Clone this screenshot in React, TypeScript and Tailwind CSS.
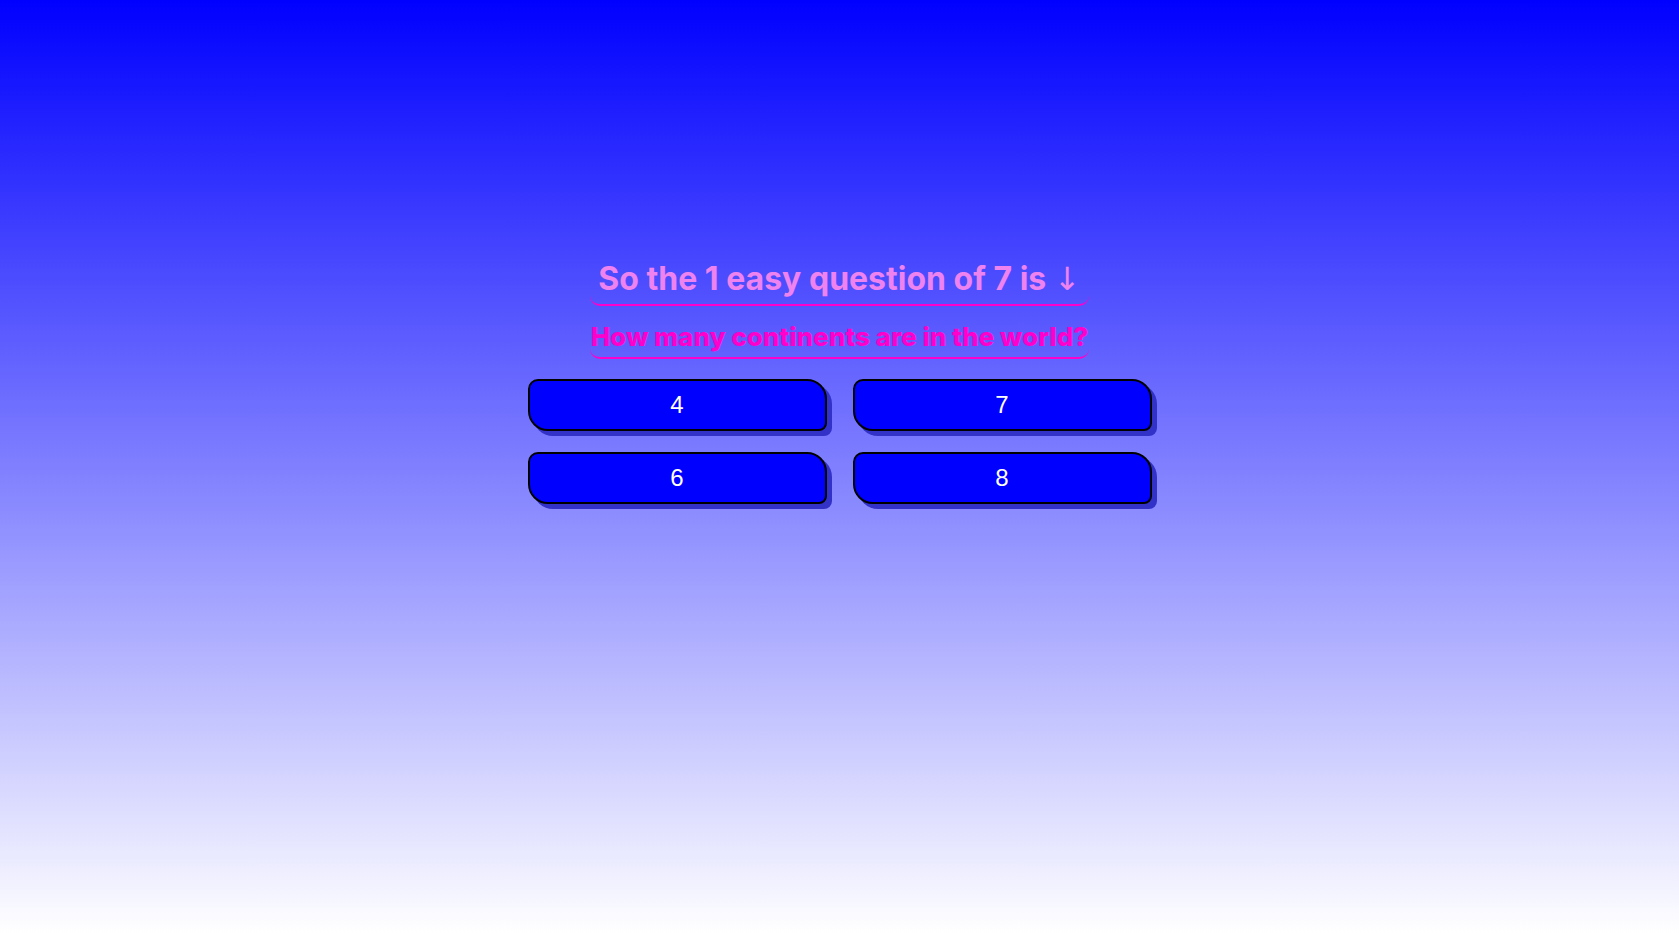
import { useState } from 'react'

const answers = ['4', '7', '6', '8']

export default function App() {
    const [picked, setPicked] = useState<string | null>(null)

    return (
        <div className="min-h-screen w-full bg-[linear-gradient(to_bottom,#0000ff,#ffffff)] flex flex-col items-center pt-[259px]">
            <div className="inline-flex flex-col items-stretch font-['Inter',sans-serif]">
                <h1 className="text-center text-[32px] leading-[40px] font-bold text-[#ee82ee] border-b-2 border-[#ff00cc] rounded-b-[10px] px-2 pb-[5px]">
                    So the 1 easy question of 7 is <span className="font-['DejaVu_Sans',sans-serif] font-normal">↓</span>
                </h1>
                <h2 className="mt-[15px] text-center text-[26px] leading-[32px] font-extrabold text-[#ff00cc] border-b-2 border-[#ff00cc] rounded-b-[10px] pb-[4px]">
                    How many continents are in the world?
                </h2>
            </div>

            <div className="mt-[20px] grid grid-cols-2 gap-x-[26px] gap-y-[21px]">
                {answers.map((a) => (
                    <button
                        key={a}
                        onClick={() => setPicked(a)}
                        className={`w-[299px] h-[52px] border-2 border-black rounded-tl-[10px] rounded-tr-[20px] rounded-bl-[20px] rounded-br-[8px] shadow-[5px_5px_0_#3232c8] text-white text-[24px] font-['Liberation_Sans',Arial,sans-serif] ${picked === a ? 'bg-[#2020ff]' : 'bg-[#0000ff]'}`}
                    >
                        {a}
                    </button>
                ))}
            </div>
        </div>
    )
}
